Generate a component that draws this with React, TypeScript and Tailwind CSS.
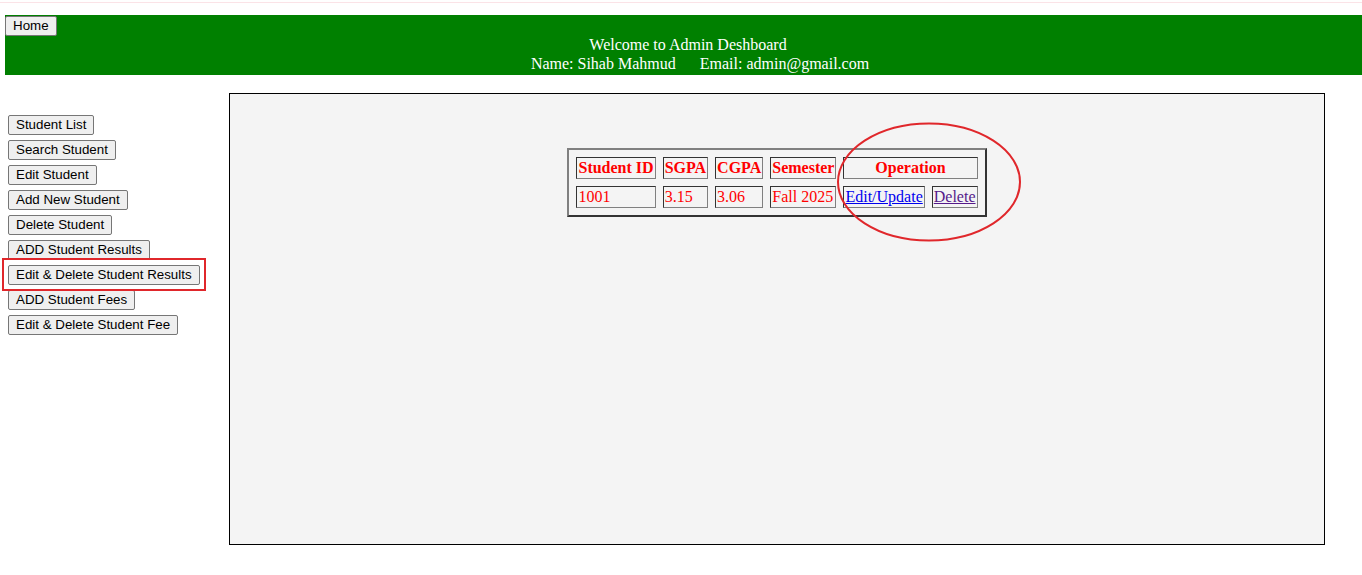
const menu = [
  "Student List",
  "Search Student",
  "Edit Student",
  "Add New Student",
  "Delete Student",
  "ADD Student Results",
  "Edit & Delete Student Results",
  "ADD Student Fees",
  "Edit & Delete Student Fee",
];

const btn =
  "bg-[#efefef] border border-[#767676] rounded-[2px] px-[7px] h-[20px] leading-[16px] text-[13.33px] text-black font-['Liberation_Sans',Arial,sans-serif] whitespace-nowrap";

const cell =
  "border border-t-[#333] border-l-[#333] border-b-[#808080] border-r-[#808080] px-[1px] py-[1px] h-[22px] leading-[18px] whitespace-nowrap";

export default function App() {
  return (
    <div className="relative w-[1362px] h-[575px] overflow-hidden bg-white font-['Liberation_Serif','Times_New_Roman',serif]">
      <div className="h-[1px] mt-[2px] bg-[#fbe3e7]" />
      {/* header */}
      <div className="mt-[12px] ml-[5px] h-[60px] bg-[#008000] text-white text-[16px] leading-[19px]">
        <button className={btn}>Home</button>
        <div className="text-center pl-[9px] -mt-[1px]">Welcome to Admin Deshboard</div>
        <div className="text-center pl-[33px]">
          Name: Sihab Mahmud<span className="inline-block w-[24px]" />Email: admin@gmail.com
        </div>
      </div>

      <div className="flex mt-[18px]">
        {/* sidebar */}
        <div className="relative w-[229px] shrink-0 pl-[8px] pt-[22px] flex flex-col items-start gap-[5px]">
          {menu.map((m) => (
            <button key={m} className={btn}>
              {m}
            </button>
          ))}
          <div className="absolute left-[2px] top-[165px] w-[204px] h-[33px] border-2 border-[#e0272b] pointer-events-none" />
        </div>

        {/* content */}
        <div className="relative w-[1096px] h-[452px] border border-black bg-[#f4f4f4]">
          <div className="flex justify-center pt-[54px]">
            <table className="border-2 border-t-[#808080] border-l-[#808080] border-b-[#333] border-r-[#333] border-separate border-spacing-[7px] text-[16px] text-[#ff0000]">
              <thead>
                <tr>
                  <th className={cell + " font-bold text-left"}>Student ID</th>
                  <th className={cell + " font-bold text-left"}>SGPA</th>
                  <th className={cell + " font-bold text-left"}>CGPA</th>
                  <th className={cell + " font-bold text-left"}>Semester</th>
                  <th colSpan={2} className={cell + " font-bold text-center"}>
                    Operation
                  </th>
                </tr>
              </thead>
              <tbody>
                <tr>
                  <td className={cell}>1001</td>
                  <td className={cell}>3.15</td>
                  <td className={cell}>3.06</td>
                  <td className={cell}>Fall 2025</td>
                  <td className={cell}>
                    <a href="#" className="text-[#0000ee] underline">Edit/Update</a>
                  </td>
                  <td className={cell}>
                    <a href="#" className="text-[#551a8b] underline">Delete</a>
                  </td>
                </tr>
              </tbody>
            </table>
          </div>
          <svg
            className="absolute left-[606px] top-[27px] pointer-events-none"
            width="186"
            height="122"
            viewBox="0 0 186 122"
          >
            <ellipse cx="93" cy="61" rx="91" ry="58.5" fill="none" stroke="#e0272b" strokeWidth="2" />
          </svg>
        </div>
      </div>
    </div>
  );
}
